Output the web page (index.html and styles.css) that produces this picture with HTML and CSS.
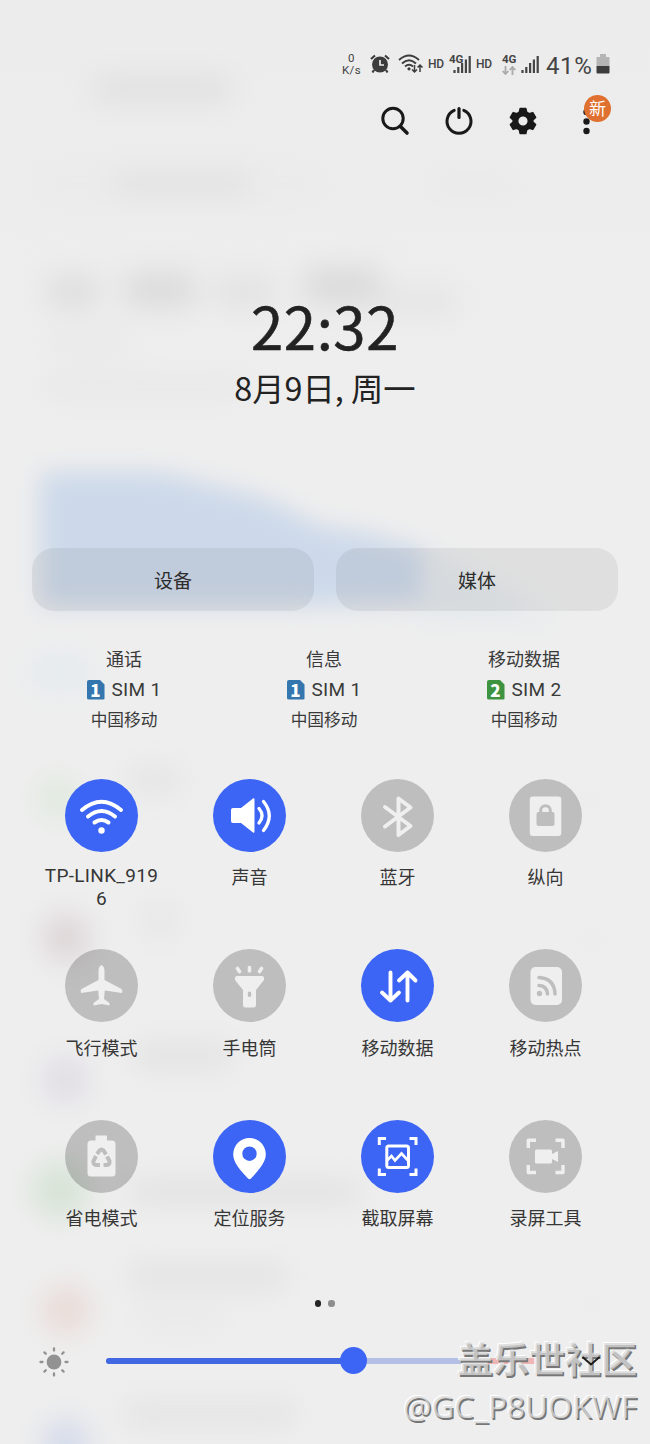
FILE: index.html
```
<!DOCTYPE html>
<html lang="zh-CN">
<head>
<meta charset="utf-8">
<title>快捷设置</title>
<link rel="stylesheet" href="styles.css">
</head>
<body>
<main class="panel">
  <svg class="backdrop" viewBox="0 0 650 1444" aria-hidden="true">
    <defs>
      <filter id="b1" x="-60%" y="-150%" width="220%" height="400%"><feGaussianBlur stdDeviation="14"/></filter>
      <filter id="b2" x="-50%" y="-50%" width="200%" height="200%"><feGaussianBlur stdDeviation="12"/></filter>
    </defs>
    <path filter="url(#b2)" fill="#cdd9ea" d="M40 472H160L265 498L320 526L370 534L425 550L437 602L300 606H40Z"/>
    <g filter="url(#b1)">
      <path d="M430 550L560 620H420Z" fill="#e4e9ed"/>
      <rect x="95" y="76" width="135" height="26" fill="#e0e0e0"/>
      <rect x="35" y="165" width="290" height="40" fill="#ebebeb"/>
      <rect x="115" y="172" width="135" height="24" fill="#e2e2e2"/>
      <rect x="430" y="175" width="85" height="20" fill="#e9e9e9"/>
      <rect x="48" y="276" width="50" height="32" fill="#dedede"/>
      <rect x="125" y="272" width="70" height="36" fill="#dcdcdc"/>
      <rect x="215" y="275" width="60" height="34" fill="#e3e3e3"/>
      <rect x="305" y="268" width="75" height="36" fill="#dadada"/>
      <rect x="380" y="290" width="75" height="24" fill="#e4e4e4"/>
      <rect x="50" y="330" width="80" height="24" fill="#e9e9e9"/>
      <rect x="45" y="375" width="200" height="24" fill="#e8e8e8"/>
      <rect x="30" y="655" width="60" height="35" fill="#e5ebef"/>
      <circle cx="58" cy="798" r="22" fill="#e0eade"/>
      <circle cx="66" cy="938" r="24" fill="#ddd5d7"/>
      <circle cx="65" cy="1080" r="24" fill="#e1dde5"/>
      <circle cx="60" cy="1190" r="30" fill="#d8e4d8"/>
      <circle cx="66" cy="1310" r="25" fill="#e9dbd7"/>
      <circle cx="66" cy="1444" r="25" fill="#d5dbeb"/>
      <rect x="130" y="765" width="50" height="30" fill="#e5e5e5"/>
      <rect x="140" y="903" width="40" height="36" fill="#e8e8e8"/>
      <rect x="135" y="1043" width="95" height="26" fill="#e2e2e2"/>
      <rect x="130" y="1180" width="230" height="24" fill="#e2e2e2"/>
      <rect x="130" y="1263" width="155" height="27" fill="#e3e3e3"/>
      <rect x="135" y="1310" width="90" height="20" fill="#e9e9e9"/>
      <rect x="125" y="1402" width="170" height="24" fill="#e3e3e3"/>
      <circle cx="592" cy="800" r="10" fill="#e9e9e9"/>
      <circle cx="592" cy="940" r="10" fill="#e9e9e9"/>
      <circle cx="592" cy="1305" r="10" fill="#e9e9e9"/>
    </g>
  </svg>

  <header class="status">
    <div class="speed"><span>0</span><span>K/s</span></div>
    <svg class="st-alarm" viewBox="0 0 20 20"><circle cx="10" cy="10.500" r="8" fill="#3c3c3c"/><path d="M10 6V11H14" fill="none" stroke="#ececec" stroke-width="1.700"/><path d="M1 5L5 1.500M19 5L15 1.500M4 16L2.500 18.500M16 16L17.500 18.500" stroke="#3c3c3c" stroke-width="2.200"/></svg>
    <svg class="st-wifi" viewBox="0 0 26 20"><g fill="none" stroke="#3c3c3c" stroke-width="1.900"><path d="M1 6Q11 -3 21 6"/><path d="M4 9.500Q11 3 18 9.500"/><path d="M7 12.500Q11 9 15 12.500"/></g><circle cx="11" cy="14.800" r="1.600" fill="#3c3c3c"/><path d="M16.500 11V18M14 15.500L16.500 18L19 15.500M22 18V11M19.500 13.500L22 11L24.500 13.500" fill="none" stroke="#3c3c3c" stroke-width="1.500"/></svg>
    <span class="hd hd-a">HD</span>
    <div class="net net-a"><span class="gen">4G</span><svg class="bars" viewBox="0 0 18 18"><path d="M1.500 15V18M5.300 12V18M9.100 8V18M12.900 4.500V18M16.700 1V18" stroke="#444" stroke-width="2.200"/></svg></div>
    <span class="hd hd-b">HD</span>
    <div class="net net-b"><span class="gen">4G</span><svg class="updown" viewBox="0 0 14 9"><path d="M3.500 0V7.500M.7 5L3.500 8L6.300 5M10.500 9V1.500M7.700 4L10.500 1L13.300 4" fill="none" stroke="#aaa" stroke-width="1.800"/></svg></div>
    <svg class="bars bars-b" viewBox="0 0 18 18"><path d="M1.500 15V18M5.300 12V18M9.100 8V18M12.900 4.500V18M16.700 1V18" stroke="#444" stroke-width="2.200"/></svg>
    <span class="pct">41%</span>
    <svg class="batt" viewBox="0 0 14 20"><path d="M4 0H10V3H13Q13.500 3 13.500 4V12H.5V4Q.5 3 1 3H4Z" fill="#b5b5b5"/><path d="M.5 12H13.500V18.500Q13.500 19.500 12.500 19.500H1.500Q.5 19.500 .5 18.500Z" fill="#3d3d3d"/></svg>
  </header>

  <nav class="actions">
    <svg viewBox="0 0 30 30"><circle cx="13" cy="12.500" r="10.200" fill="none" stroke="#191919" stroke-width="3"/><path d="M20.500 20.500L27 27" stroke="#191919" stroke-width="3.600" stroke-linecap="round"/></svg>
    <svg viewBox="0 0 30 30"><path d="M10.200 4.300A12 12 0 1 0 19.800 4.300" fill="none" stroke="#191919" stroke-width="3" stroke-linecap="round"/><path d="M15 2.500V11.500" stroke="#191919" stroke-width="3.200" stroke-linecap="round"/></svg>
    <svg viewBox="0 0 30 30"><path fill="#191919" fill-rule="evenodd" stroke="#191919" stroke-width="1.500" stroke-linejoin="round" d="M12.200 2.500H17.800L18.700 6.200L21.200 7.600L24.800 6.600L27.600 11.400L24.900 14V16L27.600 18.600L24.800 23.400L21.200 22.400L18.700 23.800L17.800 27.500H12.200L11.300 23.800L8.800 22.400L5.200 23.400L2.400 18.600L5.100 16V14L2.400 11.400L5.200 6.600L8.800 7.600L11.300 6.200ZM15 9.700A5.300 5.300 0 1 0 15 20.300A5.300 5.300 0 1 0 15 9.700Z"/></svg>
    <div class="more">
      <svg viewBox="0 0 30 30"><g fill="#191919"><circle cx="14.500" cy="6" r="3.200"/><circle cx="14.500" cy="15.500" r="3.200"/><circle cx="14.500" cy="25" r="3.200"/></g></svg>
      <span class="badge">新</span>
    </div>
  </nav>

  <section class="clock">
    <div class="time">22:32</div>
    <div class="date">8月9日, 周一</div>
  </section>

  <div class="pills"><button class="pill">设备</button><button class="pill">媒体</button></div>

  <section class="sims">
    <div class="sim"><span class="sim-use">通话</span><span class="sim-name"><i class="chip blue">1</i>SIM 1</span><span class="sim-op">中国移动</span></div>
    <div class="sim"><span class="sim-use">信息</span><span class="sim-name"><i class="chip blue">1</i>SIM 1</span><span class="sim-op">中国移动</span></div>
    <div class="sim"><span class="sim-use">移动数据</span><span class="sim-name"><i class="chip green">2</i>SIM 2</span><span class="sim-op">中国移动</span></div>
  </section>

  <section class="tiles">
    <div class="tile on"><svg viewBox="0 0 73 73"><g fill="none" stroke="#fff" stroke-width="4" stroke-linecap="round"><path d="M17 31Q36.500 14.500 56 31"/><path d="M23 37.500Q36.500 26.500 50 37.500"/><path d="M29.500 43.500Q36.500 38.500 43.500 43.500"/></g><circle cx="36.500" cy="51.500" r="3.200" fill="#fff"/></svg><span class="latin">TP-LINK_919<br>6</span></div>
    <div class="tile on"><svg viewBox="0 0 73 73"><path d="M20 29H28L40 19.500Q41.500 18.500 41.500 20.500V52.500Q41.500 54.500 40 53.500L28 44H20Q18 44 18 42V31Q18 29 20 29Z" fill="#fff"/><g fill="none" stroke="#fff" stroke-width="3.300" stroke-linecap="round"><path d="M46 29.500Q52 36.500 46 44"/><path d="M50.500 22.500Q62 36.500 50.500 51.500"/></g></svg><span>声音</span></div>
    <div class="tile"><svg viewBox="0 0 73 73"><path d="M24 28L49.500 47L37.500 56V19.500L49.500 28.500L24 47.500" fill="none" stroke="#efefef" stroke-width="4" stroke-linecap="round" stroke-linejoin="round"/></svg><span>蓝牙</span></div>
    <div class="tile"><svg viewBox="0 0 73 73"><rect x="20.800" y="17.500" width="31.500" height="39.500" rx="3" fill="#efefef"/><rect x="27.500" y="33" width="18" height="14" rx="2" fill="#bebebe"/><path d="M31.700 34V31.500A4.800 4.800 0 0 1 41.300 31.500V34" fill="none" stroke="#bebebe" stroke-width="3"/></svg><span>纵向</span></div>
    <div class="tile"><svg viewBox="0 0 73 73"><path fill="#efefef" d="M36.500 16Q39.500 17.500 39.500 22V31L56.500 40Q58 41 57 44L39.800 41.500L39 50L44.500 54V56.500L36.500 55L28.500 56.500V54L34 50L33.200 41.500L16 44Q15 41 16.500 40L33.500 31V22Q33.500 17.500 36.500 16Z"/></svg><span>飞行模式</span></div>
    <div class="tile"><svg viewBox="0 0 73 73"><path fill="#efefef" fill-rule="evenodd" d="M24 27H49Q51 27 51 29V31L43 41V56Q43 58.500 40.500 58.500H32.500Q30 58.500 30 56V41L22 31V29Q22 27 24 27ZM36.500 42.500Q34.800 42.500 34.800 44.500V46Q34.800 48 36.500 48Q38.200 48 38.200 46V44.500Q38.200 42.500 36.500 42.500Z"/><path d="M24.500 19.500L26.500 22.500M36.500 18.500V22M48.500 19.500L46.500 22.500" stroke="#efefef" stroke-width="3.600" stroke-linecap="round"/></svg><span>手电筒</span></div>
    <div class="tile on"><svg viewBox="0 0 73 73"><path d="M29.500 23.500V51.500M21 43.500L29.500 51.500L38 43.500M46.500 51.500V23.500M38 31.500L46.500 23.500L54.500 31.500" fill="none" stroke="#fff" stroke-width="3.900" stroke-linecap="round" stroke-linejoin="round"/></svg><span>移动数据</span></div>
    <div class="tile"><svg viewBox="0 0 73 73"><rect x="21.500" y="18" width="31.500" height="38" rx="5" fill="#efefef"/><g fill="none" stroke="#bebebe" stroke-width="3.500" stroke-linecap="round"><path d="M30 28.500Q45.500 29.500 46 45"/><path d="M30 36.500Q38 37 38.500 45"/></g><circle cx="30.500" cy="44.500" r="2.700" fill="#bebebe"/></svg><span>移动热点</span></div>
    <div class="tile"><svg viewBox="0 0 73 73"><path fill="#efefef" d="M30.500 15.500H42V20.500H47Q50.500 20.500 50.500 24V53Q50.500 56.500 47 56.500H26Q22.500 56.500 22.500 53V24Q22.500 20.500 26 20.500H30.500Z"/><g fill="none" stroke="#bebebe" stroke-width="4"><path d="M32 34L34.500 30.500Q36.500 28.500 38.500 30.500L41 34.500"/><path d="M42 36.500L44.500 41Q45 44.500 42 45H38.500"/><path d="M35 45H31Q27.500 44 28.500 41L31 36"/></g></svg><span>省电模式</span></div>
    <div class="tile on"><svg viewBox="0 0 73 73"><path fill="#fff" fill-rule="evenodd" d="M36.500 18A16.300 16.300 0 0 1 52.800 34.500C52.800 42 46 50 38 58.500Q36.500 60 35 58.500C27 50 20.200 42 20.200 34.500A16.300 16.300 0 0 1 36.500 18ZM36.500 26.500A7.200 7.200 0 1 0 36.500 40.900A7.200 7.200 0 1 0 36.500 26.500Z"/></svg><span>定位服务</span></div>
    <div class="tile on"><svg viewBox="0 0 73 73"><g fill="none" stroke="#fff" stroke-width="3"><path d="M18.300 25V18.500H25M48.500 18.500H55V25M55 48.500V54.500H48.500M25 54.500H18.300V48.500"/><rect x="25.800" y="26" width="21.700" height="21.500" rx="2"/><path d="M26 40.500L30.500 36L34 40.500L40.500 33.500L47 40.500" stroke-width="2.600"/></g></svg><span>截取屏幕</span></div>
    <div class="tile"><svg viewBox="0 0 73 73"><path d="M19.300 28V20.300H27M46.500 20.300H54V28M54 45V52.500H46.500M27 52.500H19.300V45" fill="none" stroke="#efefef" stroke-width="3.400" stroke-linejoin="round"/><path d="M27.500 29.500H41.500Q43 29.500 43 31V34L49 31V42L43 39V42Q43 43.500 41.500 43.500H27.500Q26 43.500 26 42V31Q26 29.500 27.500 29.500Z" fill="#efefef"/></svg><span>录屏工具</span></div>
  </section>

  <div class="dots"><i class="dot active"></i><i class="dot"></i></div>

  <div class="brightness">
    <svg class="sun" viewBox="0 0 30 30"><circle cx="15" cy="15" r="7.400" fill="#929292"/><path d="M15 1.500V3.500M15 26.500V28.500M1.500 15H3.500M26.500 15H28.500M5.400 5.400L6.800 6.800M23.200 23.200L24.600 24.600M5.400 24.600L6.800 23.200M23.200 6.800L24.600 5.400" stroke="#929292" stroke-width="2.300" stroke-linecap="round"/></svg>
    <div class="track"><div class="fill"></div><div class="knob"></div></div>
  </div>

  <div class="watermark"><span class="wm-name">盖乐世社区</span><span class="wm-user">@GC_P8UOKWF</span></div>
  <svg class="chevron" viewBox="0 0 20 14"><path d="M1.500 2L10 9.500L18.500 2" fill="none" stroke="#1c1c1c" stroke-width="2"/></svg>
</main>
</body>
</html>
```
FILE: styles.css
```
* { box-sizing: border-box; }
body { margin: 0; background: #eee; }
svg { display: block; flex: none; }
.panel {
  position: relative;
  width: 650px;
  height: 1444px;
  overflow: hidden;
  display: flex;
  flex-direction: column;
  background: linear-gradient(#ececec, #eee 30%, #eee);
  color: #252525;
  font-family: "Noto Sans CJK SC", "Noto Sans", sans-serif;
}
.backdrop { position: absolute; inset: 0; width: 650px; height: 1444px; }
.status, .actions, .clock, .pills, .sims, .tiles, .dots, .brightness { position: relative; flex: none; }

.status {
  display: flex;
  align-items: flex-start;
  height: 80px;
  padding: 53px 0 0 340px;
  font-family: Roboto, sans-serif;
  color: #444;
}
.speed { width: 23px; display: flex; flex-direction: column; align-items: center; font-size: 11.5px; line-height: 12px; margin-top: -1px; letter-spacing: .3px; }
.speed span { height: 12px; overflow: hidden; }
.st-alarm { width: 20px; height: 20px; margin: 1px 0 0 7px; }
.st-wifi { width: 26px; height: 20px; margin: 1px 0 0 8px; }
.hd { font-size: 12px; line-height: 12px; font-weight: 500; width: 17px; margin-top: 5px; white-space: nowrap; letter-spacing: -.2px; }
.hd-a { margin-left: 4px; }
.hd-b { margin-left: 5px; }
.net { position: relative; height: 24px; }
.net-a { width: 22px; margin-left: 4px; }
.net-b { width: 16px; margin-left: 9px; }
.gen { display: block; font-size: 11.5px; line-height: 13px; font-weight: 700; }
.bars { width: 18px; height: 18px; }
.net-a .bars { position: absolute; left: 4px; top: 2px; }
.updown { width: 14px; height: 9px; }
.bars-b { margin: 2px 0 0 3px; }
.pct { font-size: 24px; line-height: 26px; width: 50px; margin-left: 7px; letter-spacing: .6px; }
.batt { width: 14px; height: 20px; margin: 1px 0 0 0; }

.actions { display: flex; gap: 34px; padding-left: 380px; height: 80px; padding-top: 25.500px; }
.actions svg { width: 30px; height: 30px; }
.more { position: relative; }
.badge {
  position: absolute; left: 12px; top: -10.500px;
  width: 27px; height: 27px; border-radius: 50%;
  background: #e0702f; color: #fff;
  font-size: 17px; line-height: 26px; text-align: center;
}

.clock { height: 388px; padding-top: 125px; text-align: center; color: #222; }
.time { font-size: 58px; line-height: 80px; letter-spacing: .6px; -webkit-text-stroke: .6px #222; }
.date { font-size: 32.300px; line-height: 45px; }

.pills { display: flex; gap: 22px; padding: 0 32px; height: 63px; }
.pill {
  flex: 1; border: 0; border-radius: 22px; padding: 0 0 1px;
  background: rgba(0, 0, 0, .063);
  font-family: inherit; font-size: 19px; color: #2d2d2d;
}

.sims { display: flex; padding: 33px 25px 0 24px; height: 168px; }
.sim { width: 200px; display: flex; flex-direction: column; align-items: center; color: #3a3a3a; }
.sim-use { font-size: 18px; line-height: 28px; }
.sim-name { display: flex; align-items: center; height: 35px; gap: 7px; font-family: Roboto, sans-serif; font-size: 19px; letter-spacing: .3px; white-space: pre; }
.sim-op { font-size: 16.700px; line-height: 24px; }
.chip {
  width: 18px; height: 20px; border-radius: 2px;
  clip-path: polygon(0 0, 72% 0, 100% 25%, 100% 100%, 0 100%);
  color: #fff; font: 900 17px/20px "Noto Sans CJK SC", sans-serif; text-align: center;
}
.blue { background: #3377ae; }
.green { background: #3e9341; }

.tiles { display: grid; grid-template-columns: repeat(4, 148px); grid-auto-rows: 170.300px; height: 511px; padding-left: 27.500px; }
.tile { display: flex; flex-direction: column; align-items: center; font-size: 18px; line-height: 24px; text-align: center; color: #363636; }
.tile svg { width: 73px; height: 73px; border-radius: 50%; background: rgba(0, 0, 0, .2); margin-bottom: 12.400px; }
.tile.on svg { background: #3d65f5; }
.latin { font-family: Roboto, sans-serif; font-size: 19px; line-height: 23px; letter-spacing: .3px; }

.dots { display: flex; gap: 7px; height: 41px; padding: 10px 0 0 314.500px; }
.dot { width: 6.500px; height: 6.500px; border-radius: 50%; background: #8d8d8d; }
.dot.active { background: #252525; }

.brightness { display: flex; align-items: center; height: 59px; padding-left: 39px; }
.sun { width: 30px; height: 30px; margin-top: 2px; }
.track { position: relative; width: 434px; height: 6px; margin-left: 37px; border-radius: 3px; background: linear-gradient(90deg, #b4bfe6 0 378px, #efb5b3 378px); }
.fill { width: 248px; height: 6px; border-radius: 3px; background: #4167e2; }
.knob { position: absolute; left: 234px; top: -10.500px; width: 27px; height: 27px; border-radius: 50%; background: #3d65f5; }
.chevron { position: absolute; left: 581px; top: 1355px; width: 20px; height: 14px; }

.watermark {
  position: absolute; right: 13px; bottom: 17px;
  display: flex; flex-direction: column; align-items: flex-end;
  color: rgba(216, 216, 216, .8);
  text-shadow: 1.500px 1.500px 0 #777, -1px -1px 0 #fff;
}
.wm-name { font-size: 36px; line-height: 50px; font-weight: 700; position: relative; top: -3px; }
.wm-user { font: 31.500px/42px "Open Sans", sans-serif; }
```
